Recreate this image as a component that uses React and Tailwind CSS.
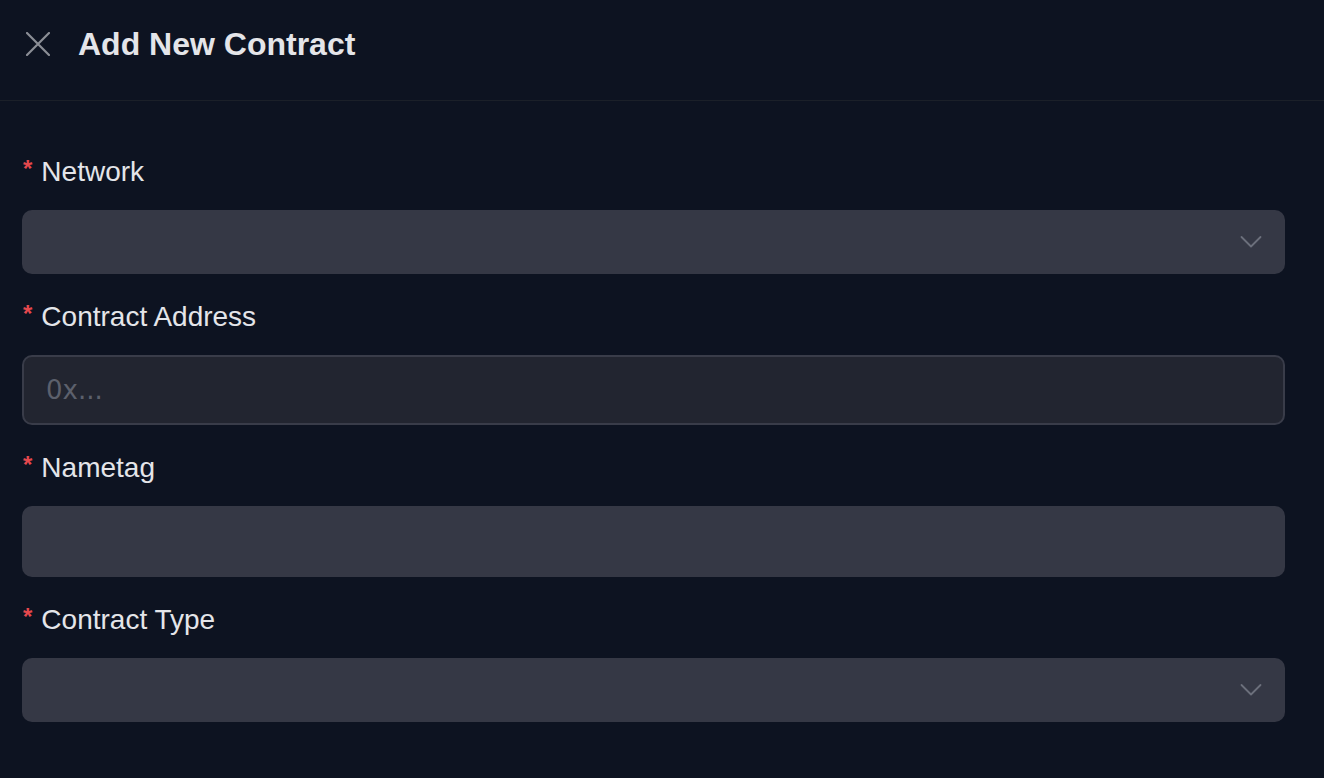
const font = { fontFamily: '"Liberation Sans", Arial, sans-serif' }

function Label({ children }) {
  return (
    <div className="flex items-center h-[36px] mb-[20px] text-[28px] leading-[36px] text-[#e4e5e9]">
      <span className="text-[#e5484d] text-[24px] font-bold mr-[9px] -mt-[6px] ml-[1px]">*</span>
      <span>{children}</span>
    </div>
  )
}

function Chevron() {
  return (
    <svg width="22" height="14" viewBox="0 0 22 14" fill="none" className="text-[#6c707c]">
      <path d="M1.5 2 L11 11.5 L20.5 2" stroke="currentColor" strokeWidth="1.8" strokeLinecap="round" strokeLinejoin="round" />
    </svg>
  )
}

function SelectBox() {
  return (
    <div className="flex items-center justify-end h-[64px] rounded-[10px] bg-[#353845] pr-[23px]">
      <Chevron />
    </div>
  )
}

function TextBox({ placeholder }) {
  return (
    <div className="flex items-center h-[70px] rounded-[10px] bg-[#222530] border-2 border-[#393c49] px-[22px]">
      <span className="text-[26px] text-[#5c606c]" style={{ fontFamily: '"DejaVu Sans", sans-serif' }}>{placeholder}</span>
    </div>
  )
}

export default function App() {
  return (
    <div className="min-h-screen bg-[#0d1321] text-white" style={font}>
      <div className="flex items-center h-[101px] pb-[12px] border-b border-[#1b2029] pl-[26px]">
        <svg width="24" height="24" viewBox="0 0 24 24" fill="none" className="text-[#8b8e96]">
          <path d="M1 1 L23 23 M23 1 L1 23" stroke="currentColor" strokeWidth="2.2" strokeLinecap="round" />
        </svg>
        <h1 className="ml-[28px] text-[32px] font-bold text-[#e4e5e9]">Add New Contract</h1>
      </div>
      <div className="pl-[22px] pr-[39px] pt-[53px]">
        <Label>Network</Label>
        <SelectBox />
        <div className="h-[25px]" />
        <Label>Contract Address</Label>
        <TextBox placeholder="0x..." />
        <div className="h-[25px]" />
        <Label>Nametag</Label>
        <div className="h-[71px] rounded-[10px] bg-[#353845]" />
        <div className="h-[25px]" />
        <Label>Contract Type</Label>
        <SelectBox />
      </div>
    </div>
  )
}
